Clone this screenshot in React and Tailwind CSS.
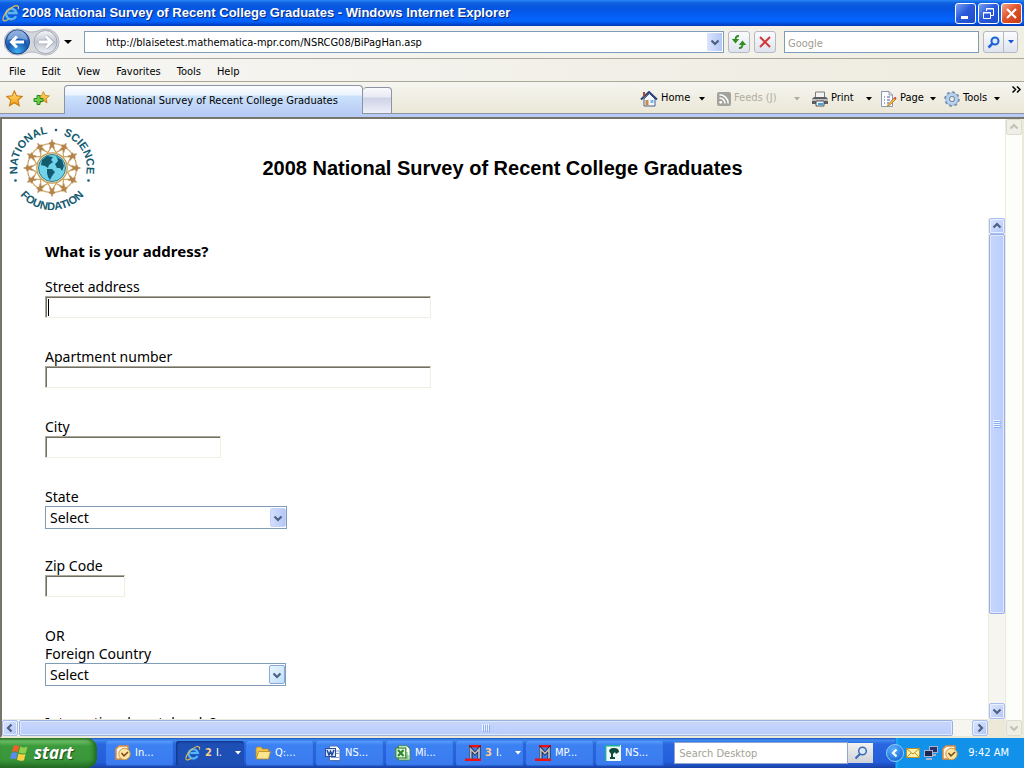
import React from "react";

const UI = "font-['DejaVu_Sans_Condensed','Noto_Sans',sans-serif]";

function IELogo({ className }) {
  return (
    <svg viewBox="0 0 18 18" className={className} aria-hidden="true">
      <path d="M14.300 12.400A5.200 5.200 0 1 1 14.600 9.200H5" fill="none" stroke="#1660c4" strokeWidth="4.200" />
      <path d="M14 12.200A5.200 5.200 0 1 1 14.400 9H6" fill="none" stroke="#5cb4f8" strokeWidth="2.400" />
      <path d="M16.200 5.200C17.400 1.600 14.700.7 11 2.700C5.400 5.600 0 12.500 1.200 16C1.900 17.700 4.800 16.600 7 14.900" fill="none" stroke="#e9bd4a" strokeWidth="1.200" />
    </svg>
  );
}

function Down({ className }) {
  return (
    <svg viewBox="0 0 6 4" className={className} width="6" height="4" aria-hidden="true">
      <path d="M0 0H6L3 3.500Z" fill="currentColor" />
    </svg>
  );
}

function Chevron({ dir, color = "#4d6185" }) {
  const paths = {
    up: "M1.500 6.500L5 3L8.500 6.500",
    down: "M1.500 3.500L5 7L8.500 3.500",
    left: "M6.500 1.500L3 5L6.500 8.500",
    right: "M3.500 1.500L7 5L3.500 8.500",
  };
  return (
    <svg viewBox="0 0 10 10" width="10" height="10" aria-hidden="true">
      <path d={paths[dir]} fill="none" stroke={color} strokeWidth="2.2" />
    </svg>
  );
}

function Star({ x = 0, y = 0, s = 1 }) {
  return (
    <path
      transform={`translate(${x} ${y}) scale(${s})`}
      d="M8 .8L10.100 5.600L15.400 6.100L11.400 9.600L12.600 14.900L8 12.100L3.400 14.900L4.600 9.600L.6 6.100L5.900 5.600Z"
      fill="url(#gold)"
      stroke="#c77a10"
      strokeWidth="1"
    />
  );
}

function TitleBar() {
  const base = "flex h-[21px] w-[21px] items-center justify-center rounded-[3px] border border-white";
  return (
    <header className="flex h-[26px] shrink-0 items-center bg-[linear-gradient(180deg,#2a86f5_0,#0f5fe0_3px,#0455e0_9px,#0560f8_17px,#0566ff_21px,#0038b8_26px)] pr-[2px] pl-[2px]">
      <IELogo className="h-[18px] w-[18px]" />
      <h1 className="ml-[2px] flex-1 truncate font-['Liberation_Sans',Arial,sans-serif] text-[13px] leading-[18px] font-bold text-white [text-shadow:1px_1px_0_#08287c]">
        2008 National Survey of Recent College Graduates - Windows Internet Explorer
      </h1>
      <div className="flex gap-[2px]">
        <button aria-label="Minimize" className={`${base} bg-[linear-gradient(135deg,#7da0f0,#2a5bdc_45%,#1c4bc8)]`}>
          <svg width="13" height="13" aria-hidden="true"><path d="M2 9H9V12H2Z" fill="#fff" /></svg>
        </button>
        <button aria-label="Restore" className={`${base} bg-[linear-gradient(135deg,#7da0f0,#2a5bdc_45%,#1c4bc8)]`}>
          <svg width="13" height="13" aria-hidden="true">
            <path d="M4.500 4V1.500H11.500V8.500H9M4 2H12" fill="none" stroke="#fff" />
            <path d="M1.500 5.500H8.500V11.500H1.500ZM1 6H9" fill="none" stroke="#fff" />
          </svg>
        </button>
        <button aria-label="Close" className={`${base} bg-[linear-gradient(135deg,#f2a58c,#e2532c_45%,#c73b12)]`}>
          <svg width="13" height="13" aria-hidden="true"><path d="M2 2L11 11M11 2L2 11" stroke="#fff" strokeWidth="2.200" /></svg>
        </button>
      </div>
    </header>
  );
}

function AddressRow() {
  const tool = "flex h-[22px] items-center justify-center rounded-[3px] border border-[#b4b9c4] bg-[linear-gradient(180deg,#fbfcff,#dfe3ee)]";
  return (
    <div className="flex h-[33px] shrink-0 items-center border-b border-[#aca899] bg-[linear-gradient(90deg,#f6f6f6,#f1efe3)] pr-[6px] pl-[4px]">
      <svg width="56" height="28" viewBox="0 0 56 28" aria-hidden="true" className="shrink-0">
        <defs>
          <radialGradient id="back" cx=".5" cy=".9" r=".9">
            <stop offset="0" stopColor="#42b0ef" />
            <stop offset=".5" stopColor="#1858b0" />
            <stop offset="1" stopColor="#5d8fd4" />
          </radialGradient>
          <linearGradient id="fwd" x1="0" x2="0" y1="0" y2="1">
            <stop offset="0" stopColor="#f6f7fa" />
            <stop offset=".5" stopColor="#bfc6d2" />
            <stop offset="1" stopColor="#eef1f6" />
          </linearGradient>
        </defs>
        <path d="M13 1C20 1 22 4 28 4S36 1 42 1A13 13 0 0 1 42 27C36 27 34 24 28 24S20 27 13 27A13 13 0 0 1 13 1Z" fill="#d3d6dc" stroke="#b5b8c0" />
        <circle cx="13.500" cy="14" r="12" fill="url(#back)" stroke="#173f86" />
        <path d="M3.500 12A10 10 0 0 1 23.500 12Q13 9 3.500 12Z" fill="#fff" opacity=".35" />
        <path d="M20 14H8M13 8.500L7.500 14L13 19.500" fill="none" stroke="#fff" strokeWidth="3" />
        <circle cx="41.500" cy="14" r="11.500" fill="url(#fwd)" stroke="#a3a9b5" />
        <path d="M35 14H47M42 8.500L47.500 14L42 19.500" fill="none" stroke="#a5abb8" strokeWidth="4.500" />
        <path d="M35 14H47M42 8.500L47.500 14L42 19.500" fill="none" stroke="#fff" strokeWidth="2.800" />
      </svg>
      <button aria-label="Recent pages" className="flex w-[24px] shrink-0 justify-center pr-[8px]">
        <svg width="8" height="4" aria-hidden="true"><path d="M0 0H8L4 4Z" /></svg>
      </button>
      <div className="flex h-[22px] flex-1 items-center border border-[#7f9db9] bg-white pr-px">
        <input aria-label="Address" defaultValue="http://blaisetest.mathematica-mpr.com/NSRCG08/BiPagHan.asp" className="min-w-0 flex-1 bg-transparent pt-[2px] pl-[21px] text-[11px] outline-none" />
        <button aria-label="Show address list" className="flex h-[18px] w-[15px] items-center justify-center bg-[linear-gradient(90deg,#dbe4fd,#b3c7f5)]"><Chevron dir="down" /></button>
      </div>
      <button aria-label="Refresh" className={`${tool} ml-[4px] w-[22px] shrink-0`}>
        <svg width="16" height="16" viewBox="0 0 16 16" aria-hidden="true">
          <path d="M8 2C5.500 1.800 4.500 3 4.500 6" fill="none" stroke="#2e8f1f" strokeWidth="2" />
          <path d="M.8 5H8.200L4.500 9.500Z" fill="#2e8f1f" />
          <path d="M8 14C10.500 14.200 11.500 13 11.500 10" fill="none" stroke="#2e8f1f" strokeWidth="2" />
          <path d="M7.800 11H15.200L11.500 6.500Z" fill="#2e8f1f" />
        </svg>
      </button>
      <button aria-label="Stop" className={`${tool} ml-[4px] w-[22px] shrink-0`}>
        <svg width="12" height="12" aria-hidden="true"><path d="M1 1L11 11M11 1L1 11" stroke="#cf3a3a" strokeWidth="2" /></svg>
      </button>
      <input aria-label="Search" placeholder="Google" className="ml-[8px] h-[22px] w-[195px] border border-[#7f9db9] bg-white pt-[2px] pl-[3px] text-[11px] outline-none placeholder:text-[#a09d8f]" />
      <div className={`${tool} ml-[4px] w-[35px] shrink-0`}>
        <button aria-label="Run search" className="flex h-full w-[20px] items-center justify-center border-r border-[#b4b9c4]">
          <svg width="13" height="13" aria-hidden="true">
            <circle cx="8" cy="5" r="3.500" fill="#dceafc" stroke="#1e62d8" strokeWidth="2" />
            <path d="M5.500 7.500L1.500 11.500" stroke="#1e62d8" strokeWidth="2.500" />
          </svg>
        </button>
        <button aria-label="Search options" className="flex h-full flex-1 items-center justify-center text-[#1656d6]"><Down /></button>
      </div>
    </div>
  );
}

function MenuRow() {
  return (
    <nav className="flex h-[23px] shrink-0 items-center gap-[16px] border-b border-[#aca899] bg-[linear-gradient(90deg,#f6f6f4,#eeebdf)] pt-[4px] pl-[9px] text-[11px]">
      {["File", "Edit", "View", "Favorites", "Tools", "Help"].map((m) => (
        <button key={m}>{m}</button>
      ))}
    </nav>
  );
}

const HomeIcon = () => (
  <svg width="18" height="16" viewBox="0 0 18 16" aria-hidden="true">
    <path d="M4 8L9.500 2.500L15 8V15H4Z" fill="#f4f8fd" stroke="#4a5f88" />
    <path d="M1 8.500L9 1L17 8.500" fill="none" stroke="#2b4379" strokeWidth="2" />
    <path d="M3 1H5V5L3 6Z" fill="#a84a32" />
    <path d="M5.500 9H8.500V14.500H5.500Z" fill="#c58b47" />
    <path d="M10.500 9H13.500V12H10.500Z" fill="#7fb6ea" />
  </svg>
);
const FeedIcon = () => (
  <svg width="14" height="14" viewBox="0 0 14 14" aria-hidden="true">
    <rect width="14" height="14" rx="2" fill="#a3a39e" />
    <circle cx="3.700" cy="10.300" r="1.400" fill="#fff" />
    <path d="M2.500 6A5.500 5.500 0 0 1 8 11.500M2.500 2.800A8.700 8.700 0 0 1 11.200 11.500" fill="none" stroke="#fff" strokeWidth="1.500" />
  </svg>
);
const PrintIcon = () => (
  <svg width="16" height="16" viewBox="0 0 16 16" aria-hidden="true">
    <path d="M3.500 1H12.500V7H3.500Z" fill="#f3f3f3" stroke="#7c7c7c" />
    <path d="M2 6H14L16 8V13H0V8Z" fill="#5d5d60" />
    <path d="M0 8H16V10H0Z" fill="#bcbcbc" />
    <path d="M4 10H12V15H4Z" fill="#e9f5ff" stroke="#555" />
    <path d="M6 12H11V14H6Z" fill="#3aa3d8" />
  </svg>
);
const PageIcon = () => (
  <svg width="17" height="16" viewBox="0 0 17 16" aria-hidden="true">
    <path d="M1.500.5H9L12.500 4V15.500H1.500Z" fill="#fbfcff" stroke="#8f98ab" />
    <path d="M9 .5V4H12.500" fill="none" stroke="#8f98ab" />
    <path d="M4 6H5M4 9H5M4 12H5M7 6H10M7 9H10M7 12H9" stroke="#4b5b9c" strokeWidth="1.200" />
    <path d="M8 13.500L14.500 6.500L16 8L9.500 14.500L7.500 15Z" fill="#f0b53c" stroke="#a9762a" strokeWidth=".7" />
    <path d="M14.500 6.500L16 8" stroke="#d44" strokeWidth="2" />
  </svg>
);
const GearIcon = () => (
  <svg width="16" height="16" viewBox="0 0 16 16" aria-hidden="true">
    <circle cx="8" cy="8" r="6.700" fill="none" stroke="#6f8db0" strokeWidth="2.200" strokeDasharray="2.630 2.630" />
    <circle cx="8" cy="8" r="4.500" fill="none" stroke="#7f9cbd" strokeWidth="4.200" />
    <circle cx="8" cy="8" r="4.500" fill="none" stroke="#b9d1ea" strokeWidth="3" />
    <circle cx="8" cy="8" r="2.500" fill="#f2f0e4" stroke="#6686ab" />
  </svg>
);

const COMMANDS = [
  { name: "Home", icon: HomeIcon, width: "w-[65px] mr-[4px]" },
  { name: "Feeds (J)", icon: FeedIcon, width: "w-[83px] mr-[4px]", disabled: true },
  { name: "Print", icon: PrintIcon, width: "w-[60px]" },
  { name: "Page", icon: PageIcon, width: "w-[56px]" },
  { name: "Tools", icon: GearIcon, width: "w-[56px] mr-[4px]" },
];

function TabRow() {
  return (
    <div className="flex h-[32px] shrink-0 items-end bg-[linear-gradient(180deg,#f6f5f0,#eae7d6)] shadow-[inset_0_-1px_0_#8d93a3]">
      <div className="flex h-full shrink-0 items-center gap-[10px] pl-[6px]">
        <button aria-label="Favorites Center">
          <svg width="17" height="17" viewBox="0 0 17 17" aria-hidden="true">
            <defs>
              <linearGradient id="gold" x1="0" x2="0" y1="0" y2="1">
                <stop offset="0" stopColor="#ffe27a" />
                <stop offset="1" stopColor="#f79c10" />
              </linearGradient>
            </defs>
            <Star x={0} y={0} s={1.05} />
          </svg>
        </button>
        <button aria-label="Add to Favorites">
          <svg width="17" height="17" viewBox="0 0 17 17" aria-hidden="true">
            <Star x={4} y={1} s={0.8} />
            <path d="M4 5.500H7V8.500H10V11.500H7V14.500H4V11.500H1V8.500H4Z" fill="#6fd04f" stroke="#2a8a1c" />
          </svg>
        </button>
      </div>
      <button className="ml-[14px] flex h-[29px] w-[299px] shrink-0 items-center rounded-t-[4px] border border-b-0 border-[#8d93a3] bg-[linear-gradient(180deg,#fbfdff_0,#eaf3fd_9px,#cbe2fb_10px,#b8cbf5)] pt-[2px] pl-[21px] text-[11px]">
        2008 National Survey of Recent College Graduates
      </button>
      <button aria-label="New Tab" className="h-[27px] w-[29px] shrink-0 rounded-t-[4px] border border-l-0 border-[#8d93a3] bg-[linear-gradient(180deg,#f8f9fc_0,#e8eaf4_9px,#cdd2e6_10px,#eef0f8)]" />
      <div className="flex h-full flex-1 items-center justify-end gap-[8px] overflow-hidden pt-px text-[11px]">
        {COMMANDS.map(({ name, icon: Icon, width, disabled }) => (
          <button key={name} disabled={disabled} className={`${width} flex h-[20px] shrink-0 items-center gap-[3px] whitespace-nowrap disabled:text-[#b0ad9f]`}>
            <Icon />
            <span className="flex-1 text-left">{name}</span>
            <Down className="shrink-0" />
          </button>
        ))}
        <button aria-label="More commands" className="self-start pt-[3px] pr-[3px]">
          <svg width="9" height="7" aria-hidden="true"><path d="M.5.5L3.500 3.500L.5 6.500M5 .5L8 3.500L5 6.500" fill="none" stroke="#000" strokeWidth="1.500" /></svg>
        </button>
      </div>
    </div>
  );
}

function NsfLogo() {
  const figures = Array.from({ length: 12 }, (_, i) => i * 30);
  return (
    <svg width="88" height="88" viewBox="-44 -44 88 88" role="img" aria-label="National Science Foundation">
      <defs>
        <path id="arcTop" d="M-34.200 6A34.700 34.700 0 1 1 34.200 6" />
        <path id="arcBottom" d="M-42 0A42 42 0 0 0 42 0" />
      </defs>
      {figures.map((a) => (
        <g key={a} transform={`rotate(${a})`}>
          <path d="M0 -24.500L-6.500 -23.800M0 -24.500L6.500 -23.800M0 -22L-4.200 -15.500M0 -22L4.200 -15.500" fill="none" stroke="#c39a52" strokeWidth="1.100" />
          <path d="M-3.200 -25L-1 -25.800L0 -28.500L1 -25.800L3.200 -25L1.500 -23L2.500 -19.500L0 -21.500L-2.500 -19.500L-1.500 -23Z" fill="#b4834a" stroke="#b4834a" strokeWidth=".6" />
        </g>
      ))}
      <circle r="15.200" fill="#f2e6c4" stroke="#c39a52" strokeWidth="1.200" />
      <circle r="13.500" fill="#6fd3ea" stroke="#17647c" strokeWidth=".8" />
      <path d="M-10 -8L-5 -12L1 -11L-1 -8L1 -6L-3 -3L-4 0L-7 -2L-11 -3ZM-5 1L0 1L3 4L0 8L-2 12L-4 9L-5 5ZM5 -11L10 -8L12 -2L10 3L8 0L5 0L3 -4L6 -7ZM4 -12L6 -11L5 -10Z" fill="#155b70" />
      <g className="font-['Liberation_Sans',Arial,sans-serif] text-[11px] font-bold" fill="#155b70">
        <text><textPath href="#arcTop" startOffset="0">NATIONAL</textPath></text>
        <text><textPath href="#arcTop" startOffset="100%" textAnchor="end">SCIENCE</textPath></text>
        <text><textPath href="#arcBottom" startOffset="50%" textAnchor="middle">FOUNDATION</textPath></text>
      </g>
      <g fill="#155b70">
        <circle cx="4" cy="-38" r="1.300" />
        <circle cx="-36.500" cy="12.500" r="1.300" />
        <circle cx="36.500" cy="12.500" r="1.300" />
      </g>
    </svg>
  );
}

function TextField({ id, label, width, caret }) {
  return (
    <div className="mb-[30px] flex flex-col items-start">
      <label htmlFor={id}>{label}</label>
      <div className={`relative max-w-full ${width}`}>
        <input id={id} type="text" className="block h-[22px] w-full border border-t-[#aca899] border-r-[#f1efe2] border-b-[#f1efe2] border-l-[#aca899] bg-white px-[3px] shadow-[inset_1px_1px_0_#716f64] outline-none" />
        {caret && <span className="pointer-events-none absolute top-[3px] left-[3px] h-[17px] w-px bg-black" />}
      </div>
    </div>
  );
}

function SelectField({ id, label, width, hot }) {
  return (
    <div className="mb-[28px] flex flex-col items-start">
      <label htmlFor={id}>{label}</label>
      <div className={`relative max-w-full ${width}`}>
        <select id={id} className="block h-[23px] w-full appearance-none border border-[#7f9db9] bg-white pl-[4px] outline-none">
          <option>Select</option>
        </select>
        <span className={`pointer-events-none absolute top-[2px] right-[1px] flex h-[19px] w-[16px] items-center justify-center rounded-[2px] border ${hot ? "border-[#8aa9d8] bg-[linear-gradient(135deg,#e8f5ff,#bfdffb)]" : "border-[#c3d3fd] bg-[linear-gradient(90deg,#d3defc,#b3c7f5)]"}`}>
          <Chevron dir="down" />
        </span>
      </div>
    </div>
  );
}

function ScrollButton({ dir, label, disabled }) {
  return (
    <button
      aria-label={label}
      disabled={disabled}
      className="flex h-[16px] w-[16px] shrink-0 items-center justify-center rounded-[2px] border border-[#a9bef0] bg-[linear-gradient(135deg,#dbe5fe,#b3c7f5)] shadow-[inset_0_0_0_1px_#e8effe] disabled:border-[#dddcd0] disabled:bg-[#f0efe6] disabled:bg-none disabled:shadow-none"
    >
      <Chevron dir={dir} color={disabled ? "#c3c2b4" : "#4d6185"} />
    </button>
  );
}

function BrowserPage() {
  return (
    <div className="flex min-h-0 flex-1 flex-col border-t-[3px] border-[#b8cbf5]">
      <div className="flex min-h-0 flex-1 border-t-2 border-b-2 border-l-2 border-t-[#77746a] border-b-[#ece9d8] border-l-[#77746a] bg-white">
        <div className="flex min-w-0 flex-1 flex-col">
          <div className="flex h-[99px] shrink-0 items-center pb-[2px] pl-[6px]">
            <NsfLogo />
            <h2 className="flex-1 pr-[96px] text-center font-['Liberation_Sans',Arial,sans-serif] text-[20px] font-bold">
              2008 National Survey of Recent College Graduates
            </h2>
          </div>
          <div className="flex min-h-0 flex-1">
            <form className="min-w-0 flex-1 overflow-hidden pt-[24px] pl-[43px] font-['Noto_Sans',sans-serif] text-[14px] leading-[18px]">
              <h3 className="mb-[18px] text-[15px] font-bold">What is your address?</h3>
              <TextField id="street" label="Street address" width="w-[386px]" caret />
              <TextField id="apt" label="Apartment number" width="w-[386px]" />
              <TextField id="city" label="City" width="w-[176px]" />
              <SelectField id="state" label="State" width="w-[242px]" />
              <TextField id="zip" label="Zip Code" width="w-[80px]" />
              <p>OR</p>
              <SelectField id="country" label="Foreign Country" width="w-[241px]" hot />
              <TextField id="postal" label="International postal code?" width="w-[176px]" />
            </form>
            <div className="flex w-[17px] shrink-0 flex-col border-l border-[#edebdf] bg-[#f6f5f0]">
              <ScrollButton dir="up" label="Scroll form up" />
              <div className="flex min-h-0 flex-1 flex-col">
                <div className="flex h-[81%] items-center justify-center rounded-[2px] border border-[#98b1e4] bg-[linear-gradient(90deg,#c8d6fb,#b9cdfc)] shadow-[inset_0_0_0_1px_#dfe8fe]">
                  <svg width="8" height="8" aria-hidden="true"><path d="M0 .5H7M0 2.500H7M0 4.500H7M0 6.500H7" stroke="#eef4fe" /><path d="M1 1.500H8M1 3.500H8M1 5.500H8M1 7.500H8" stroke="#8cb0f8" /></svg>
                </div>
              </div>
              <ScrollButton dir="down" label="Scroll form down" />
            </div>
          </div>
          <div className="flex h-[17px] shrink-0 items-center border-t border-[#edebdf] bg-[#f6f5f0]">
            <ScrollButton dir="left" label="Scroll page left" />
            <div className="h-[16px] min-w-0 flex-1 pl-px">
              <div className="flex h-full w-[98%] items-center justify-center rounded-[2px] border border-[#98b1e4] bg-[linear-gradient(180deg,#c8d6fb,#b9cdfc)] shadow-[inset_0_0_0_1px_#dfe8fe]">
                <svg width="8" height="8" aria-hidden="true"><path d="M.5 0V7M2.500 0V7M4.500 0V7M6.500 0V7" stroke="#eef4fe" /><path d="M1.500 1V8M3.500 1V8M5.500 1V8M7.500 1V8" stroke="#8cb0f8" /></svg>
              </div>
            </div>
            <ScrollButton dir="right" label="Scroll page right" />
            <div className="h-full w-[17px] shrink-0 bg-[#ece9d8]" />
          </div>
        </div>
        <div className="flex w-[19px] shrink-0 flex-col items-center justify-between border-r-2 border-l border-r-[#ece9d8] border-l-[#edebdf] bg-[#fdfdf9]">
          <ScrollButton dir="up" label="Scroll window up" disabled />
          <ScrollButton dir="down" label="Scroll window down" disabled />
        </div>
      </div>
    </div>
  );
}

const OutlookIcon = () => (
  <svg width="16" height="16" viewBox="0 0 16 16" className="shrink-0" aria-hidden="true">
    <path d="M1 4L4 1H13V12L10 14H1Z" fill="#fdf1df" stroke="#e08a3c" strokeWidth="1.500" />
    <circle cx="9.500" cy="9" r="5.700" fill="#fde3a4" stroke="#d09a3c" />
    <path d="M6.500 8L9 10.800L13 7" fill="none" stroke="#7a4a14" strokeWidth="1.500" />
  </svg>
);
const FolderIcon = () => (
  <svg width="16" height="16" viewBox="0 0 16 16" className="shrink-0" aria-hidden="true">
    <path d="M1 3.500L2 2H6L7.500 4H13.500V13H1Z" fill="#f3c64e" stroke="#b8881c" strokeWidth=".8" />
    <path d="M3.500 6.500H15.500L13.500 14H1.200Z" fill="#fde58f" stroke="#b8881c" strokeWidth=".8" />
  </svg>
);
const WordIcon = () => (
  <svg width="16" height="16" viewBox="0 0 16 16" className="shrink-0" aria-hidden="true">
    <path d="M4.500 1H12L15 4V15.500H4.500Z" fill="#fff" stroke="#5572a8" />
    <path d="M11 6H14M11 8.500H14M6 12.500H14" stroke="#7d9fd8" />
    <rect x=".5" y="3.500" width="10" height="8" fill="#dce8fb" stroke="#2b4f9c" />
    <path d="M2 5L4 10L5.500 6.500L7 10L9 5" fill="none" stroke="#2147a0" strokeWidth="1.500" />
  </svg>
);
const ExcelIcon = () => (
  <svg width="16" height="16" viewBox="0 0 16 16" className="shrink-0" aria-hidden="true">
    <path d="M3.500.8H12L15 4V15H3.500Z" fill="#fff" stroke="#3d8b3c" />
    <path d="M9 11H14M9 13H14M12 7V14" stroke="#6bb56a" />
    <rect x=".8" y="3" width="10" height="10" fill="#e5f6df" stroke="#3d8b3c" strokeWidth="1.300" />
    <path d="M3 5L8.500 11M8.500 5L3 11" stroke="#28862a" strokeWidth="2" />
  </svg>
);
const MIcon = () => (
  <svg width="16" height="16" viewBox="0 0 16 16" className="shrink-0" aria-hidden="true">
    <path d="M4 0H16V2.500H4ZM0 13.500H16V16H0Z" fill="#f01010" />
    <path d="M6 13.500V4L10 8.500L14 4V13.500" fill="none" stroke="#1a2030" strokeWidth="3" />
    <path d="M5.700 13.500V4L10 8.500L14 4V13.500" fill="none" stroke="#b8bcc4" strokeWidth="1.800" />
  </svg>
);
const TreeIcon = () => (
  <svg width="16" height="16" viewBox="0 0 16 16" className="shrink-0" aria-hidden="true">
    <rect width="16" height="16" fill="#effaf6" />
    <path d="M.7 16V.7H15" fill="none" stroke="#19b295" strokeWidth="1.400" />
    <path d="M4 6Q5 2.500 9 3Q14 3 14 7L11 9L10 7L8 9V12H10V14H5V12H6V9Z" fill="#0f4a3f" />
  </svg>
);
const IETaskIcon = () => <IELogo className="h-[16px] w-[16px] shrink-0" />;

const TASKS = [
  { icon: OutlookIcon, text: "In..." },
  { icon: IETaskIcon, text: "I.", count: "2", active: true },
  { icon: FolderIcon, text: "Q:..." },
  { icon: WordIcon, text: "NS..." },
  { icon: ExcelIcon, text: "Mi..." },
  { icon: MIcon, text: "I.", count: "3" },
  { icon: MIcon, text: "MP..." },
  { icon: TreeIcon, text: "NS..." },
];

function Taskbar() {
  return (
    <footer className="flex h-[30px] shrink-0 items-stretch bg-[linear-gradient(180deg,#1b50c0_0,#3f8cf0_2px,#2a66e0_6px,#245edb_24px,#1941a5)] text-[11px] text-white">
      <button className="flex w-[97px] shrink-0 items-center gap-[5px] rounded-r-[10px] bg-[linear-gradient(180deg,#2f7a2f_0,#6ebf66_3px,#3c9a3c_8px,#399639_22px,#256b25)] pl-[10px] shadow-[inset_-3px_0_4px_#1f6a22]">
        <svg width="19" height="18" viewBox="0 0 19 18" aria-hidden="true">
          <path d="M3.500 2Q6.500 .5 9.300 2.200L7.800 8.200Q5 6.600 1.800 8Z" fill="#f0602a" />
          <path d="M10.300 2.600Q13.500 4.300 17.500 2.800L15.800 9Q12 10.200 8.800 8.600Z" fill="#8fd04a" />
          <path d="M1.500 9Q4.700 7.600 7.500 9.200L6 15.200Q3 13.700 0 15Z" fill="#5a8cf0" />
          <path d="M8.500 9.600Q12 11.200 15.500 10L14 16.200Q10.500 17.500 7 15.700Z" fill="#fbd042" />
        </svg>
        <span className="font-['Open_Sans','Noto_Sans',sans-serif] text-[17px] leading-[20px] font-bold italic [text-shadow:1px_1px_1px_#1b4d1b]">start</span>
      </button>
      <div className="flex min-w-0 flex-1 items-center pl-[9px]">
        {TASKS.map(({ icon: Icon, text, count, active }, i) => (
          <button
            key={i}
            className={`mr-[2px] flex h-[25px] w-[68px] shrink-0 items-center gap-[3px] rounded-[3px] pr-[3px] pl-[9px] ${active ? "bg-[#1e4fb4] shadow-[inset_1px_1px_2px_#0f3283]" : "bg-[linear-gradient(180deg,#5a9bfa_0,#3c81f3_4px,#3a7bee)] shadow-[inset_-1px_-1px_1px_#2a62cc]"}`}
          >
            <Icon />
            <span className="flex flex-1 gap-[4px] pl-px">
              {count && <b className="text-[#ffd08a]">{count}</b>}
              {text}
            </span>
            {count && <Down className="shrink-0" />}
          </button>
        ))}
      </div>
      <div className="flex shrink-0 items-center pr-[13px]">
        <input aria-label="Search Desktop" placeholder="Search Desktop" className="h-[22px] w-[174px] border border-[#8fa7cf] bg-white pl-[4px] text-[11px] text-black outline-none placeholder:text-[#a5a294]" />
        <button aria-label="Search the desktop" className="flex h-[20px] w-[25px] items-center justify-center bg-[linear-gradient(180deg,#f2f2f2,#cfd2d8)]">
          <svg width="14" height="14" aria-hidden="true">
            <circle cx="8.500" cy="5" r="3.800" fill="#dceafc" stroke="#3a6cb4" strokeWidth="1.500" />
            <path d="M6 8L1.500 12.500" stroke="#3a6cb4" strokeWidth="2.200" />
          </svg>
        </button>
      </div>
      <div className="flex shrink-0 items-center bg-[linear-gradient(90deg,transparent_9px,#0a4fc0_9px,#17b0f4_10px,transparent_13px),linear-gradient(90deg,transparent_9px,#1291ea_9px)] pr-[15px]">
        <button aria-label="Show hidden icons" className="flex h-[18px] w-[18px] items-center justify-center rounded-full border border-[#8fd0ff] bg-[radial-gradient(circle_at_40%_30%,#5ab4ff,#0a58cc)]">
          <Chevron dir="left" color="#fff" />
        </button>
        <div className="ml-[2px] flex items-center gap-[3px]">
          <svg width="14" height="12" aria-hidden="true">
            <rect x=".5" y="1.500" width="13" height="9" fill="#fdf0a8" stroke="#b8922c" />
            <path d="M1 2L7 7L13 2M1 10L5 6M13 10L9 6" fill="none" stroke="#b8922c" />
          </svg>
          <svg width="16" height="16" aria-hidden="true">
            <path d="M6 1H15V8H6ZM9 9H13V11H9Z" fill="#a9b4cc" />
            <path d="M7 2H14V7H7Z" fill="#27336e" />
            <path d="M1 5H10V12H1ZM3 13H9V15H3Z" fill="#a9b4cc" />
            <path d="M2 6H9V11H2Z" fill="#1c2450" />
          </svg>
          <OutlookIcon />
        </div>
        <time className="ml-[10px] whitespace-nowrap">9:42 AM</time>
      </div>
    </footer>
  );
}

export default function App() {
  return (
    <div className={`flex h-screen flex-col overflow-hidden bg-[#ece9d8] text-black ${UI}`}>
      <TitleBar />
      <AddressRow />
      <MenuRow />
      <TabRow />
      <BrowserPage />
      <Taskbar />
    </div>
  );
}
